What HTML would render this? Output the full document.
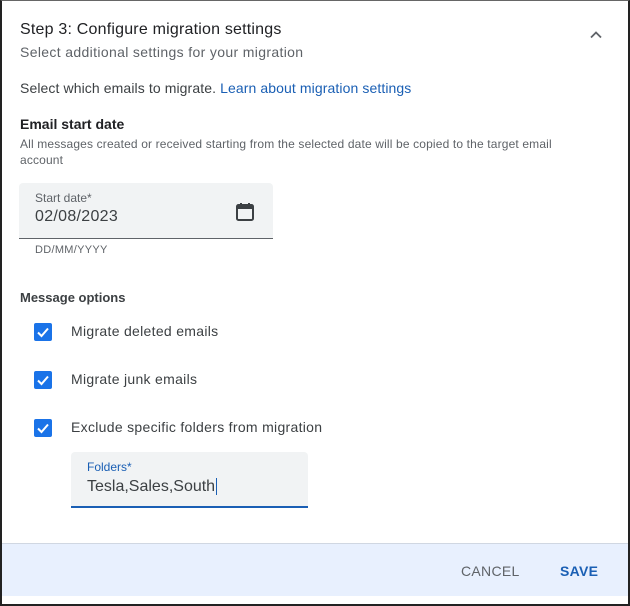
<!DOCTYPE html>
<html><head><style>
*{margin:0;padding:0;box-sizing:border-box}
body{width:630px;height:606px;background:#fff;font-family:"Liberation Sans",sans-serif;position:relative;overflow:hidden;color:#202124}
.frame{position:absolute;left:0;top:0;width:630px;height:606px;border:2px solid #222;border-top:1px solid #666;}
.abs{position:absolute;white-space:nowrap}
.cb{position:absolute;left:34px;width:18px;height:18px;background:#1a73e8;border-radius:2px}
.cb svg{position:absolute;left:0;top:0}
.lbl{position:absolute;left:71px;font-size:14px;color:#3c4043;letter-spacing:.3px}
</style></head><body>
<div class="frame"></div>
<div class="abs" style="left:20px;top:21px;font-size:16px;color:#202124;letter-spacing:.2px">Step 3: Configure migration settings</div>
<div class="abs" style="left:20px;top:44px;font-size:14px;color:#5f6368;letter-spacing:.35px">Select additional settings for your migration</div>
<svg class="abs" style="left:588px;top:27px" width="16" height="16" viewBox="0 0 16 16"><path d="M3 10.5L8 5.5L13 10.5" stroke="#5f6368" stroke-width="1.8" fill="none"/></svg>
<div class="abs" style="left:20px;top:80px;font-size:14px;color:#3c4043;letter-spacing:.1px">Select which emails to migrate. <span style="color:#1a5fb4">Learn about migration settings</span></div>
<div class="abs" style="left:20px;top:116px;font-size:14px;font-weight:bold;color:#202124">Email start date</div>
<div class="abs" style="left:20px;top:136px;font-size:12px;color:#5f6368;line-height:16px;white-space:normal;width:560px;letter-spacing:.15px">All messages created or received starting from the selected date will be copied to the target email account</div>
<div class="abs" style="left:19px;top:183px;width:254px;height:56px;background:#f1f3f4;border-radius:4px 4px 0 0;border-bottom:1px solid #5f6368"></div>
<div class="abs" style="left:35px;top:191px;font-size:12px;color:#5f6368">Start date*</div>
<div class="abs" style="left:35px;top:208px;font-size:16px;color:#3c4043;letter-spacing:.3px">02/08/2023</div>
<svg class="abs" style="left:234px;top:201px" width="22" height="22" viewBox="0 0 22 22"><rect x="3" y="4" width="16" height="15" rx="1.5" fill="none" stroke="#3c4043" stroke-width="2"/><rect x="3" y="4" width="16" height="4" fill="#3c4043"/><rect x="6" y="2" width="2" height="3" fill="#3c4043"/><rect x="14" y="2" width="2" height="3" fill="#3c4043"/></svg>
<div class="abs" style="left:35px;top:244px;font-size:11px;color:#5f6368;letter-spacing:.3px">DD/MM/YYYY</div>
<div class="abs" style="left:20px;top:290px;font-size:13px;font-weight:bold;color:#3c4043">Message options</div>
<div class="cb" style="top:323px"><svg width="18" height="18" viewBox="0 0 18 18"><path d="M4 9.5L7.5 13L14 5.5" stroke="#fff" stroke-width="2" fill="none"/></svg></div>
<div class="lbl" style="top:323px">Migrate deleted emails</div>
<div class="cb" style="top:371px"><svg width="18" height="18" viewBox="0 0 18 18"><path d="M4 9.5L7.5 13L14 5.5" stroke="#fff" stroke-width="2" fill="none"/></svg></div>
<div class="lbl" style="top:371px">Migrate junk emails</div>
<div class="cb" style="top:419px"><svg width="18" height="18" viewBox="0 0 18 18"><path d="M4 9.5L7.5 13L14 5.5" stroke="#fff" stroke-width="2" fill="none"/></svg></div>
<div class="lbl" style="top:419px">Exclude specific folders from migration</div>
<div class="abs" style="left:71px;top:452px;width:237px;height:56px;background:#f1f3f4;border-radius:4px 4px 0 0;border-bottom:2px solid #1a5fb4"></div>
<div class="abs" style="left:87px;top:460px;font-size:12px;color:#1a5fb4">Folders*</div>
<div class="abs" style="left:87px;top:478px;font-size:16px;color:#3c4043">Tesla,Sales,South<span style="border-left:1px solid #1a5fb4;margin-left:1px"></span></div>
<div class="abs" style="left:2px;top:543px;width:626px;height:53px;background:#e8f0fe;border-top:1px solid #d0d7e2"></div>
<div class="abs" style="left:461px;top:563px;font-size:14px;color:#5f6368;letter-spacing:.3px">CANCEL</div>
<div class="abs" style="left:560px;top:563px;font-size:14px;color:#1a5fb4;font-weight:bold;letter-spacing:.3px">SAVE</div>
</body></html>
